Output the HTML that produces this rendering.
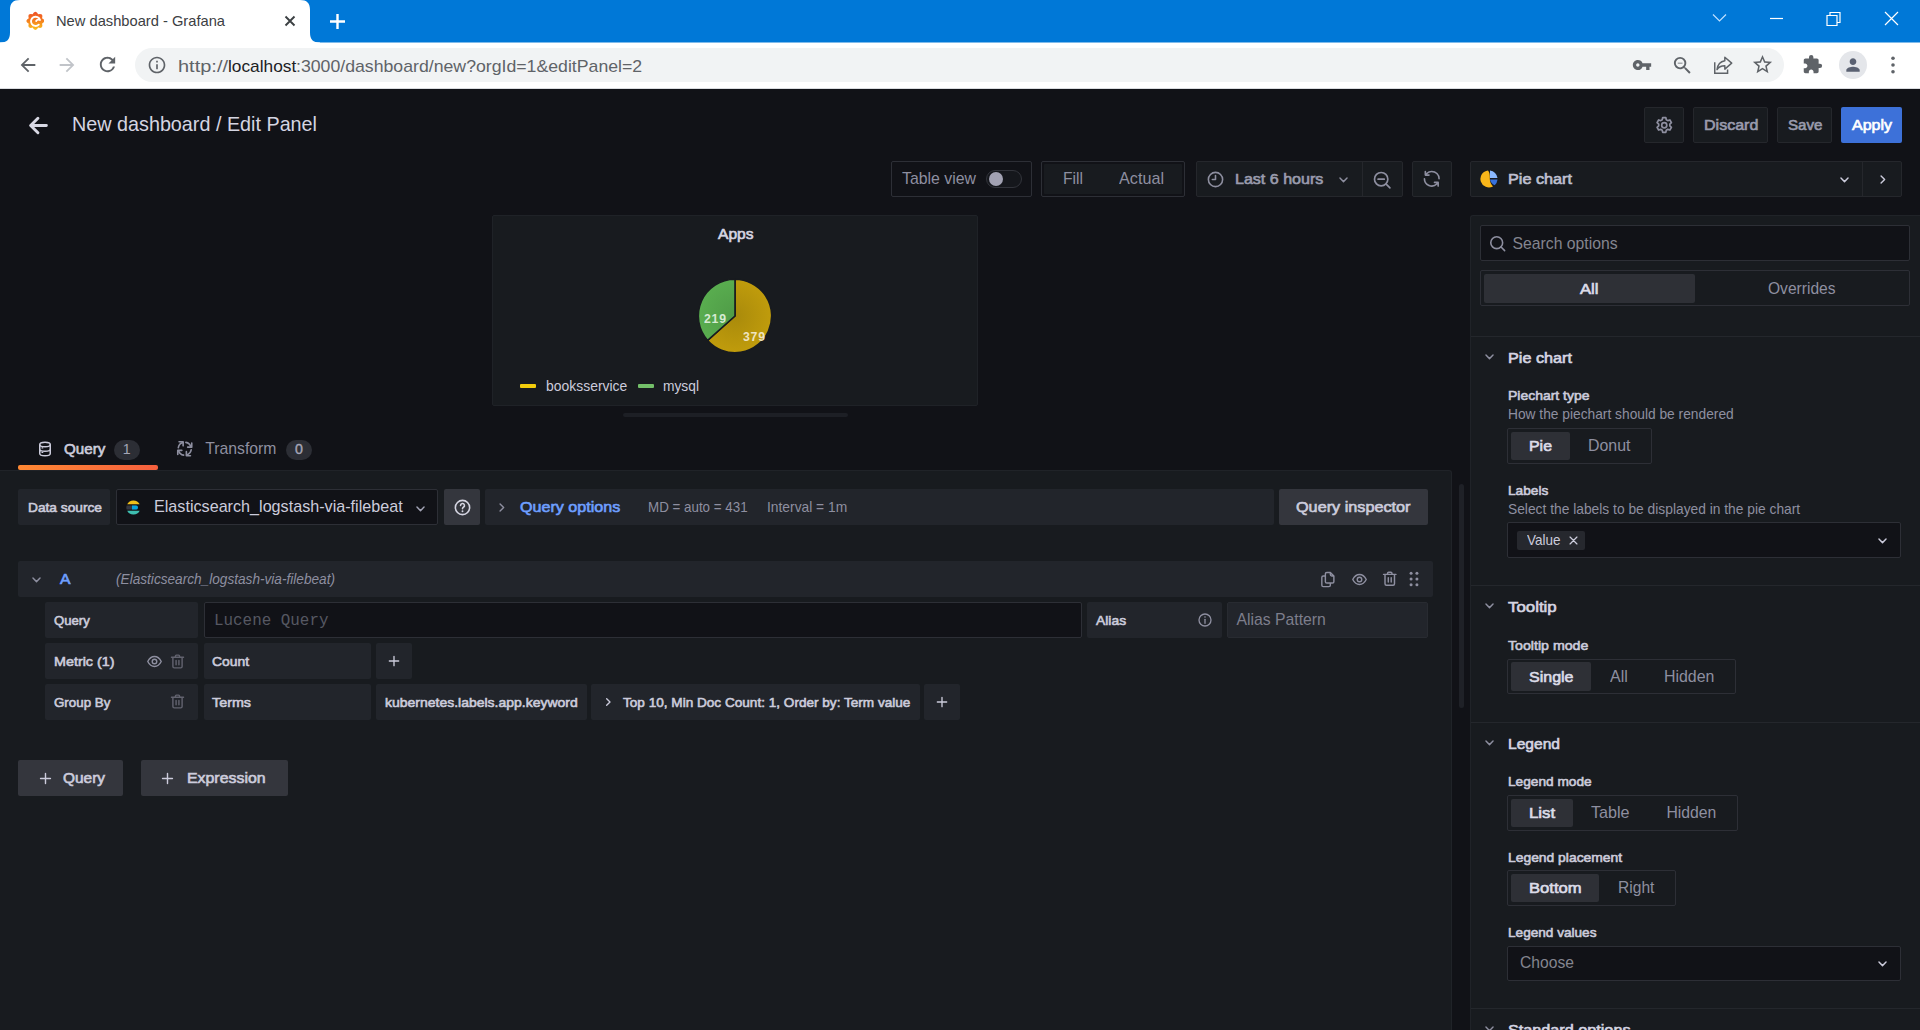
<!DOCTYPE html>
<html lang="en"><head><meta charset="utf-8"><title>New dashboard - Grafana</title>
<style>html,body{margin:0;padding:0}body{width:1920px;height:1030px;overflow:hidden;position:relative;background:#111217;font-family:"Liberation Sans",sans-serif}
.b{position:absolute;box-sizing:border-box;display:block}
.t{position:absolute;white-space:nowrap;line-height:1;transform-origin:0 50%;display:block}</style></head>
<body>
<div class="b" style="left:0px;top:30px;width:1920px;height:58px;background:#fff;"></div>
<svg class="b" style="left:0;top:0" width="1920" height="44" viewBox="0 0 1920 44"><rect width="1920" height="42.5" fill="#0078d7"/></svg>
<svg class="b" style="left:0;top:0" width="330" height="44" viewBox="0 0 330 44"><path d="M0 42.5 C7 42.5 10 39.5 10 32.5 V10 C10 3 13 0 20 0 H300 C307 0 310 3 310 10 V32.5 C310 39.5 313 42.5 320 42.5 V44 H0 Z" fill="#fff"/></svg>
<svg class="b" style="left:25.5px;top:10.6px" width="18.8" height="20" viewBox="0 0 20 21"><defs><linearGradient id="gf" x1="0" y1="1" x2="0" y2="0"><stop offset="0" stop-color="#fbc21a"/><stop offset="0.55" stop-color="#f47b20"/><stop offset="1" stop-color="#ee4f27"/></linearGradient></defs><path d="M10 0.7Q11.85 1.08 12.91 3.38Q15.28 2.5 16.86 3.54Q17.9 5.12 17.02 7.49Q19.32 8.55 19.7 10.4Q19.32 12.25 17.02 13.31Q17.9 15.68 16.86 17.26Q15.28 18.3 12.91 17.42Q11.85 19.72 10 20.1Q8.15 19.72 7.09 17.42Q4.72 18.3 3.14 17.26Q2.1 15.68 2.98 13.31Q0.68 12.25 0.3 10.4Q0.68 8.55 2.98 7.49Q2.1 5.12 3.14 3.54Q4.72 2.5 7.09 3.38Q8.15 1.08 10 0.7Z" fill="url(#gf)"/><path d="M14.9 9.4A4.9 4.9 0 1 0 13.6 14.4M14.9 9.4c-1.6-.6-3.4-.2-4.1 1" fill="none" stroke="#fff" stroke-width="2" stroke-linecap="round"/></svg>
<span class="t" style="left:55.6px;top:14px;font-size:14.5px;color:#3c4043;transform:scaleX(1.0129);">New dashboard - Grafana</span>
<svg class="b" style="left:284px;top:15px" width="12" height="12" viewBox="0 0 12 12"><path d="M1.5 1.5l9 9M10.5 1.5l-9 9" stroke="#3c4043" stroke-width="1.9" fill="none"/></svg>
<svg class="b" style="left:329px;top:13px" width="17" height="17" viewBox="0 0 17 17"><path d="M8.5 1v15M1 8.5h15" stroke="#fff" stroke-width="2.4" fill="none"/></svg>
<svg class="b" style="left:1700px;top:4px" width="210" height="30" viewBox="0 0 210 30"><g fill="none" stroke="#fff" stroke-width="1.2"><path d="M13 10.5l6.5 6.5 6.5-6.5" stroke="#bfe0ff"/><path d="M70 14.5h13"/><path d="M127 11.5h10v10h-10z"/><path d="M130 11.5v-3h10v10h-3"/><path d="M185 8l13 13M198 8l-13 13"/></g></svg>
<div class="b" style="left:0px;top:88px;width:1920px;height:1px;background:#dadce0;"></div>
<svg class="b" style="left:17px;top:54px" width="22" height="22" viewBox="0 0 24 24"><path d="M20 11H7.83l5.59-5.59L12 4l-8 8 8 8 1.41-1.41L7.83 13H20v-2z" fill="#5f6368"/></svg>
<svg class="b" style="left:56px;top:54px" width="22" height="22" viewBox="0 0 24 24"><path d="M12 4l-1.41 1.41L16.17 11H4v2h12.17l-5.58 5.59L12 20l8-8z" fill="#c1c4c9"/></svg>
<svg class="b" style="left:96px;top:53px" width="23" height="23" viewBox="0 0 24 24"><path d="M17.65 6.35A7.958 7.958 0 0 0 12 4c-4.42 0-7.99 3.58-7.99 8s3.57 8 7.99 8c3.73 0 6.84-2.55 7.73-6h-2.08A5.99 5.99 0 0 1 12 18c-3.31 0-6-2.69-6-6s2.69-6 6-6c1.66 0 3.14.69 4.22 1.78L13 11h7V4l-2.35 2.35z" fill="#5f6368"/></svg>
<div class="b" style="left:135px;top:48px;width:1649px;height:34px;background:#f1f3f4;border-radius:17px;"></div>
<svg class="b" style="left:147px;top:55px" width="20" height="20" viewBox="0 0 24 24"><path d="M11 7h2v2h-2zm0 4h2v6h-2zm1-9C6.48 2 2 6.48 2 12s4.48 10 10 10 10-4.48 10-10S17.52 2 12 2zm0 18c-4.41 0-8-3.59-8-8s3.59-8 8-8 8 3.59 8 8-3.59 8-8 8z" fill="#5f6368"/></svg>
<span class="t" style="left:177.7px;top:58px;font-size:17px;color:#5f6368;transform:scaleX(1.1756);">http://</span>
<span class="t" style="left:227.8px;top:58px;font-size:17px;color:#202124;transform:scaleX(1.0177);">localhost</span>
<span class="t" style="left:296.3px;top:58px;font-size:17px;color:#5f6368;transform:scaleX(1.0405);">:3000/dashboard/new?orgId=1&amp;editPanel=2</span>
<svg class="b" style="left:1632px;top:55px" width="20" height="20" viewBox="0 0 24 24"><path d="M12.65 10A5.99 5.99 0 0 0 7 6c-3.31 0-6 2.69-6 6s2.69 6 6 6a5.99 5.99 0 0 0 5.65-4H17v4h4v-4h2v-4H12.65zM7 14c-1.1 0-2-.9-2-2s.9-2 2-2 2 .9 2 2-.9 2-2 2z" fill="#5f6368"/></svg>
<svg class="b" style="left:1671px;top:54px" width="23" height="23" viewBox="0 0 24 24"><path d="M15.5 14h-.79l-.28-.27A6.471 6.471 0 0 0 16 9.5 6.5 6.5 0 1 0 9.5 16c1.61 0 3.09-.59 4.23-1.57l.27.28v.79l5 4.99L20.49 19l-4.99-5zm-6 0C7.01 14 5 11.99 5 9.5S7.01 5 9.5 5 14 7.01 14 9.5 11.99 14 9.5 14zM7 9h5v1H7z" fill="#5f6368"/></svg>
<svg class="b" style="left:1712px;top:54px" width="22" height="22" viewBox="0 0 24 24"><path d="M3 9v12h14v-4" fill="none" stroke="#5f6368" stroke-width="1.6"/><path d="M14 3.5l7.5 6.5-7.5 6.5v-3.8c-4 0-6.8 1.3-8.5 4.3.6-5 3.5-8.8 8.5-9.6z" fill="none" stroke="#5f6368" stroke-width="1.6" stroke-linejoin="round"/></svg>
<svg class="b" style="left:1751px;top:53px" width="23" height="23" viewBox="0 0 24 24"><path d="M22 9.24l-7.19-.62L12 2 9.19 8.63 2 9.24l5.46 4.73L5.82 21 12 17.27 18.18 21l-1.63-7.03L22 9.24zM12 15.4l-3.76 2.27 1-4.28-3.32-2.88 4.38-.38L12 6.1l1.71 4.04 4.38.38-3.32 2.88 1 4.28L12 15.4z" fill="#5f6368"/></svg>
<svg class="b" style="left:1802px;top:54px" width="21" height="21" viewBox="0 0 24 24"><path d="M20.5 11H19V7c0-1.1-.9-2-2-2h-4V3.5a2.5 2.5 0 0 0-5 0V5H4c-1.1 0-1.99.9-1.99 2v3.8H3.5c1.49 0 2.7 1.21 2.7 2.7s-1.21 2.7-2.7 2.7H2V20c0 1.1.9 2 2 2h3.8v-1.5c0-1.49 1.21-2.7 2.7-2.7 1.49 0 2.7 1.21 2.7 2.7V22H17c1.1 0 2-.9 2-2v-4h1.5a2.5 2.5 0 0 0 0-5z" fill="#5f6368"/></svg>
<div class="b" style="left:1839px;top:51px;width:28px;height:28px;background:#e4e6ea;border-radius:14px;"></div>
<svg class="b" style="left:1843px;top:55px" width="20" height="20" viewBox="0 0 24 24"><path d="M12 12c2.21 0 4-1.79 4-4s-1.79-4-4-4-4 1.79-4 4 1.79 4 4 4zm0 2c-2.67 0-8 1.34-8 4v2h16v-2c0-2.66-5.33-4-8-4z" fill="#5a6172"/></svg>
<svg class="b" style="left:1889px;top:55px" width="8" height="20" viewBox="0 0 8 20"><circle cx="4" cy="3.3" r="1.8" fill="#5f6368"/><circle cx="4" cy="10" r="1.8" fill="#5f6368"/><circle cx="4" cy="16.7" r="1.8" fill="#5f6368"/></svg>
<div class="b" style="left:0px;top:89px;width:1920px;height:941px;background:#111217;"></div>
<svg class="b" style="left:25.00px;top:111.50px;color:#d8d8e4;" width="27" height="27" viewBox="0 0 24 24"><path d="M19 12H5.5M11.5 5.5L5 12l6.5 6.5" fill="none" stroke="currentColor" stroke-width="2.6" stroke-linecap="round" stroke-linejoin="round"/></svg>
<span class="t" style="left:72px;top:113px;font-size:21px;color:#d5d5e2;transform:scaleX(0.9411);">New dashboard / Edit Panel</span>
<div class="b" style="left:1644px;top:107px;width:40px;height:36px;background:#181b1f;border:1px solid #25272c;border-radius:2px;"></div>
<svg class="b" style="left:1653.75px;top:114.75px;color:#8e8fa0;" width="20.5" height="20.5" viewBox="0 0 24 24"><circle cx="12" cy="12" r="3" fill="none" stroke="currentColor" stroke-width="2"/><path d="M10.2 3h3.6l.6 2.6 1.7 1 2.5-.8 1.8 3.1-1.9 1.8v2l1.9 1.8-1.8 3.1-2.5-.8-1.7 1-.6 2.6h-3.6l-.6-2.6-1.7-1-2.5.8-1.8-3.1 1.9-1.8v-2L3.6 8.9l1.8-3.1 2.5.800 1.7-1z" fill="none" stroke="currentColor" stroke-width="2" stroke-linejoin="round"/></svg>
<div class="b" style="left:1693px;top:107px;width:75px;height:36px;background:#181b1f;border:1px solid #25272c;border-radius:2px;"></div>
<span class="t" style="left:1704px;top:117px;font-size:15.5px;color:#9a9bad;-webkit-text-stroke:0.65px currentColor;transform:scaleX(1.0334);">Discard</span>
<div class="b" style="left:1777px;top:107px;width:55px;height:36px;background:#181b1f;border:1px solid #25272c;border-radius:2px;"></div>
<span class="t" style="left:1787.5px;top:117px;font-size:15.5px;color:#9a9bad;-webkit-text-stroke:0.65px currentColor;transform:scaleX(0.9761);">Save</span>
<div class="b" style="left:1841px;top:107px;width:61px;height:36px;background:#3d71d9;border-radius:2px;"></div>
<span class="t" style="left:1851.7px;top:117px;font-size:15.5px;color:#fff;-webkit-text-stroke:0.65px currentColor;transform:scaleX(1.0314);">Apply</span>
<div class="b" style="left:891px;top:161px;width:141px;height:36px;background:#111217;border:1px solid #2d2f36;border-radius:2px;"></div>
<span class="t" style="left:902px;top:171px;font-size:15.75px;color:#8e8fa0;transform:scaleX(1.0062);">Table view</span>
<div class="b" style="left:986px;top:170px;width:36px;height:18px;background:#15171c;border:1px solid #32343b;border-radius:9px;"></div>
<div class="b" style="left:988.5px;top:172px;width:14px;height:14px;background:#a2a2b3;border-radius:7px;"></div>
<div class="b" style="left:1041px;top:161px;width:144px;height:36px;background:#111217;border:1px solid #2d2f36;border-radius:2px;"></div>
<div class="b" style="left:1044px;top:164px;width:138px;height:30px;background:#181b1f;border-radius:1px;"></div>
<span class="t" style="left:1062.5px;top:171px;font-size:15.75px;color:#8e8fa0;transform:scaleX(0.9938);">Fill</span>
<span class="t" style="left:1119px;top:171px;font-size:15.75px;color:#8e8fa0;transform:scaleX(1.0278);">Actual</span>
<div class="b" style="left:1196px;top:161px;width:207px;height:36px;background:#181b1f;border:1px solid #25272c;border-radius:2px;"></div>
<div class="b" style="left:1362px;top:162px;width:1px;height:34px;background:#25272c;"></div>
<svg class="b" style="left:1205.50px;top:169.50px;color:#8e8fa0;" width="19" height="19" viewBox="0 0 24 24"><circle cx="12" cy="12" r="9" fill="none" stroke="currentColor" stroke-width="2"/><path d="M12 7v5H8" fill="none" stroke="currentColor" stroke-width="2" stroke-linecap="round" stroke-linejoin="round"/></svg>
<span class="t" style="left:1235px;top:171px;font-size:15.5px;color:#9a9bad;-webkit-text-stroke:0.65px currentColor;transform:scaleX(1.0350);">Last 6 hours</span>
<svg class="b" style="left:1335.00px;top:170.50px;color:#8e8fa0;" width="17" height="17" viewBox="0 0 24 24"><path d="M7 10l5 5 5-5" fill="none" stroke="currentColor" stroke-width="2" stroke-linecap="round" stroke-linejoin="round"/></svg>
<svg class="b" style="left:1372.00px;top:169.50px;color:#8e8fa0;" width="20" height="20" viewBox="0 0 24 24"><circle cx="11" cy="11" r="8" fill="none" stroke="currentColor" stroke-width="2"/><path d="M17 17l4.5 4.5M7.3 11h7.4" stroke="currentColor" stroke-width="2" stroke-linecap="round"/></svg>
<div class="b" style="left:1412px;top:161px;width:40px;height:36px;background:#181b1f;border:1px solid #25272c;border-radius:2px;"></div>
<svg class="b" style="left:1422.25px;top:169.45px;color:#8e8fa0;" width="19.5" height="19.5" viewBox="0 0 24 24"><path fill="currentColor" d="M19.91 15.51h-4.53a1 1 0 0 0 0 2h2.4A8 8 0 0 1 4 12a1 1 0 0 0-2 0 10 10 0 0 0 16.88 7.23V21a1 1 0 0 0 2 0v-4.5a1 1 0 0 0-.97-.99zM12 2a10 10 0 0 0-6.88 2.77V3a1 1 0 0 0-2 0v4.5a1 1 0 0 0 1 1h4.5a1 1 0 0 0 0-2h-2.4A8 8 0 0 1 20 12a1 1 0 0 0 2 0A10 10 0 0 0 12 2z"/></svg>
<div class="b" style="left:1470px;top:161px;width:432px;height:36px;background:#181b1f;border:1px solid #25272c;border-radius:2px;"></div>
<div class="b" style="left:1862px;top:162px;width:1px;height:34px;background:#25272c;"></div>
<svg class="b" style="left:1479px;top:169px" width="20" height="20" viewBox="0 0 20 20"><path d="M9 1.5A8.5 8.5 0 1 0 14 17.4c-2-2-3.2-4.8-3.2-7.4 0-3 .3-6-1.8-8.5z" fill="#f9b61a"/><path d="M11 1.5a8.5 8.5 0 0 1 7.5 7.5H11z" fill="#8ab8ff"/><path d="M11 10.5h7.5a8.5 8.5 0 0 1-2.8 5.7C13 15 11.4 13 11 10.5z" fill="#3871dc"/></svg>
<span class="t" style="left:1507.5px;top:171px;font-size:15.5px;color:#bfc0d0;-webkit-text-stroke:0.65px currentColor;transform:scaleX(1.0462);">Pie chart</span>
<svg class="b" style="left:1835.50px;top:170.50px;color:#ccccdc;" width="17" height="17" viewBox="0 0 24 24"><path d="M7 10l5 5 5-5" fill="none" stroke="currentColor" stroke-width="2" stroke-linecap="round" stroke-linejoin="round"/></svg>
<svg class="b" style="left:1873.50px;top:170.50px;color:#ccccdc;" width="17" height="17" viewBox="0 0 24 24"><path d="M10 7l5 5-5 5" fill="none" stroke="currentColor" stroke-width="2" stroke-linecap="round" stroke-linejoin="round"/></svg>
<div class="b" style="left:492px;top:215px;width:486px;height:190.5px;background:#181b1f;border:1px solid #1f2227;border-radius:2px;"></div>
<span class="t" style="left:717.5px;top:226px;font-size:15.5px;color:#d5d5e2;-webkit-text-stroke:0.65px currentColor;transform:scaleX(1.0044);">Apps</span>
<svg class="b" style="left:695px;top:276px" width="80" height="80" viewBox="-40 -40 80 80"><defs>
<radialGradient id="gy" gradientUnits="userSpaceOnUse" cx="0" cy="0" r="37"><stop offset="0" stop-color="#a98a0b"/><stop offset="1" stop-color="#c09c0c"/></radialGradient>
<radialGradient id="gg" gradientUnits="userSpaceOnUse" cx="0" cy="0" r="37"><stop offset="0" stop-color="#4f9b47"/><stop offset="1" stop-color="#59ad4f"/></radialGradient></defs>
<path d="M0 0 L0 -36.7 A36.7 36.7 0 1 1 -27.36 24.46 Z" fill="url(#gy)" stroke="#181b1f" stroke-width="1.6"/>
<path d="M0 0 L-27.36 24.46 A36.7 36.7 0 0 1 0 -36.7 Z" fill="url(#gg)" stroke="#181b1f" stroke-width="1.6"/></svg>
<span class="t" style="left:703.8px;top:313px;font-size:12.4px;color:#d6ead2;font-weight:700;transform:scaleX(0.9879);letter-spacing:0.8px;">219</span>
<span class="t" style="left:743px;top:331px;font-size:12.4px;color:#efe4c0;font-weight:700;transform:scaleX(0.9879);letter-spacing:0.8px;">379</span>
<div class="b" style="left:520px;top:384px;width:16px;height:4px;background:#f2cc0c;border-radius:1px;"></div>
<span class="t" style="left:545.5px;top:379px;font-size:14.2px;color:#ccccdc;transform:scaleX(0.9817);">booksservice</span>
<div class="b" style="left:638px;top:384px;width:16px;height:4px;background:#73bf69;border-radius:1px;"></div>
<span class="t" style="left:663.4px;top:379px;font-size:14.2px;color:#ccccdc;transform:scaleX(0.9713);">mysql</span>
<div class="b" style="left:623px;top:413px;width:225px;height:4px;background:#1d1f25;border-radius:2px;"></div>
<div class="b" style="left:0px;top:470px;width:1452px;height:560px;background:#181b1f;border-top:1px solid #202328;border-right:1px solid #202328;border-top-right-radius:3px;box-sizing:border-box;"></div>
<div class="b" style="left:1458.5px;top:484px;width:5px;height:224px;background:#1f2127;border-radius:2.5px;"></div>
<div class="b" style="left:18px;top:465px;width:140px;height:5px;border-radius:2px;background:linear-gradient(90deg,#ff8833,#f55f3e);"></div>
<svg class="b" style="left:36.00px;top:440.00px;color:#ccccdc;" width="18" height="18" viewBox="0 0 24 24"><ellipse cx="12" cy="6" rx="7" ry="3" fill="none" stroke="currentColor" stroke-width="2"/><path d="M5 6v12c0 1.7 3.1 3 7 3s7-1.3 7-3V6M5 12c0 1.7 3.1 3 7 3s7-1.3 7-3" fill="none" stroke="currentColor" stroke-width="2"/><path d="M8 10.5h1M8 16.5h1" stroke="currentColor" stroke-width="1.6" stroke-linecap="round"/></svg>
<span class="t" style="left:63.7px;top:441px;font-size:15.5px;color:#ccccdc;-webkit-text-stroke:0.65px currentColor;transform:scaleX(0.9782);">Query</span>
<div class="b" style="left:114px;top:439.5px;width:26px;height:20px;background:#2c2e35;border-radius:10px;"></div>
<span class="t" style="left:122.8px;top:442px;font-size:14.2px;color:#a4a5b5;">1</span>
<svg class="b" style="left:175.25px;top:439.25px;color:#8e8fa0;" width="19.5" height="19.5" viewBox="0 0 24 24"><g fill="none" stroke="currentColor" stroke-width="2" stroke-linecap="round" stroke-linejoin="round"><g transform="rotate(0 12 12)"><path d="M13.4 4.1A8 8 0 0 1 19.6 9.6"/><path d="M20.6 5v5h-5"/></g><g transform="rotate(90 12 12)"><path d="M13.4 4.1A8 8 0 0 1 19.6 9.6"/><path d="M20.6 5v5h-5"/></g><g transform="rotate(180 12 12)"><path d="M13.4 4.1A8 8 0 0 1 19.6 9.6"/><path d="M20.6 5v5h-5"/></g><g transform="rotate(270 12 12)"><path d="M13.4 4.1A8 8 0 0 1 19.6 9.6"/><path d="M20.6 5v5h-5"/></g></g></svg>
<span class="t" style="left:205.3px;top:441px;font-size:15.75px;color:#8e8fa0;">Transform</span>
<div class="b" style="left:286px;top:439.5px;width:26px;height:20px;background:#2c2e35;border-radius:10px;"></div>
<span class="t" style="left:295px;top:442px;font-size:14.2px;color:#a4a5b5;-webkit-text-stroke:0.4px currentColor;">0</span>
<div class="b" style="left:18px;top:489px;width:92px;height:36px;background:#22252b;border-radius:2px;"></div>
<span class="t" style="left:27.5px;top:501px;font-size:13.5px;color:#ccccdc;-webkit-text-stroke:0.6px currentColor;transform:scaleX(1.0165);">Data source</span>
<div class="b" style="left:116px;top:489px;width:322px;height:36px;background:#111217;border:1px solid #2d2f36;border-radius:2px;"></div>
<svg class="b" style="left:126px;top:500px" width="15" height="15" viewBox="0 0 15 15"><path d="M1.2 4.2A6.8 6.8 0 0 1 7.5 0.4c2.7 0 5 1.5 6.2 3.8z" fill="#f0bf1a"/><path d="M0.6 5.5h9.4a2 2 0 0 1 0 4H0.6a7 7 0 0 1 0-4z" fill="#343741"/><path d="M6 5.5h4a2 2 0 0 1 0 4H6z" fill="#07a5de"/><path d="M1.2 10.8h12.5a6.8 6.8 0 0 1-6.2 3.8 6.8 6.8 0 0 1-6.3-3.8z" fill="#3ebeb0"/></svg>
<span class="t" style="left:154.2px;top:499px;font-size:15.75px;color:#ccccdc;transform:scaleX(1.0256);">Elasticsearch_logstash-via-filebeat</span>
<svg class="b" style="left:411.50px;top:499.50px;color:#a3a4b6;" width="17" height="17" viewBox="0 0 24 24"><path d="M7 10l5 5 5-5" fill="none" stroke="currentColor" stroke-width="2" stroke-linecap="round" stroke-linejoin="round"/></svg>
<div class="b" style="left:444px;top:489px;width:36px;height:36px;background:#34363d;border-radius:2px;"></div>
<svg class="b" style="left:452.50px;top:497.50px;color:#d5d5e2;" width="19" height="19" viewBox="0 0 24 24"><circle cx="12" cy="12" r="9" fill="none" stroke="currentColor" stroke-width="2"/><path d="M9.5 9.5a2.5 2.5 0 1 1 3.6 2.2c-.7.4-1.1.900-1.1 1.8" fill="none" stroke="currentColor" stroke-width="2" stroke-linecap="round"/><circle cx="12" cy="16.8" r="1.2" fill="currentColor"/></svg>
<div class="b" style="left:485px;top:489px;width:789px;height:36px;background:#22252b;border-radius:2px;"></div>
<svg class="b" style="left:492.50px;top:498.50px;color:#8e8fa0;" width="17" height="17" viewBox="0 0 24 24"><path d="M10 7l5 5-5 5" fill="none" stroke="currentColor" stroke-width="2" stroke-linecap="round" stroke-linejoin="round"/></svg>
<span class="t" style="left:520.4px;top:499px;font-size:15.5px;color:#6e9fff;-webkit-text-stroke:0.65px currentColor;transform:scaleX(1.0394);">Query options</span>
<span class="t" style="left:648.4px;top:500px;font-size:14.2px;color:#8e8fa0;transform:scaleX(0.9424);">MD = auto = 431</span>
<span class="t" style="left:767px;top:500px;font-size:14.2px;color:#8e8fa0;transform:scaleX(0.9732);">Interval = 1m</span>
<div class="b" style="left:1279px;top:489px;width:149px;height:36px;background:#34363d;border-radius:2px;"></div>
<span class="t" style="left:1296.3px;top:499px;font-size:15.5px;color:#ccccdc;-webkit-text-stroke:0.65px currentColor;transform:scaleX(1.0464);">Query inspector</span>
<div class="b" style="left:18px;top:561px;width:1415px;height:36px;background:#22252b;border-radius:2px;"></div>
<svg class="b" style="left:27.50px;top:570.50px;color:#8e8fa0;" width="17" height="17" viewBox="0 0 24 24"><path d="M7 10l5 5 5-5" fill="none" stroke="currentColor" stroke-width="2" stroke-linecap="round" stroke-linejoin="round"/></svg>
<span class="t" style="left:59.8px;top:571px;font-size:15.5px;color:#6e9fff;-webkit-text-stroke:0.65px currentColor;transform:scaleX(1.0151);">A</span>
<span class="t" style="left:116.4px;top:572px;font-size:14.2px;color:#8e8fa0;transform:scaleX(0.9610);font-style:italic;">(Elasticsearch_logstash-via-filebeat)</span>
<svg class="b" style="left:1318.50px;top:570.70px;color:#8e8fa0;" width="17" height="17" viewBox="0 0 24 24"><path d="M11 2h5l5 5v8a2 2 0 0 1-2 2h-8a2 2 0 0 1-2-2V4a2 2 0 0 1 2-2zM16 2v3a2 2 0 0 0 2 2h3M9 7H6a2 2 0 0 0-2 2v11a2 2 0 0 0 2 2h8a2 2 0 0 0 2-2v-3" fill="none" stroke="currentColor" stroke-width="2" stroke-linejoin="round"/></svg>
<svg class="b" style="left:1350.50px;top:570.50px;color:#8e8fa0;" width="17" height="17" viewBox="0 0 24 24"><path d="M2.5 12C4.8 7.5 8.2 5 12 5s7.2 2.5 9.5 7c-2.3 4.5-5.7 7-9.5 7s-7.2-2.5-9.5-7z" fill="none" stroke="currentColor" stroke-width="2" stroke-linejoin="round"/><circle cx="12" cy="12" r="3.2" fill="none" stroke="currentColor" stroke-width="2"/></svg>
<svg class="b" style="left:1381.25px;top:570.45px;color:#8e8fa0;" width="17.5" height="17.5" viewBox="0 0 24 24"><path d="M3.5 6h17M9 6V4.5A1.5 1.5 0 0 1 10.5 3h3A1.5 1.5 0 0 1 15 4.5V6M5.5 6v13a2 2 0 0 0 2 2h9a2 2 0 0 0 2-2V6M10 10.5v6M14 10.5v6" fill="none" stroke="currentColor" stroke-width="2" stroke-linecap="round" stroke-linejoin="round"/></svg>
<svg class="b" style="left:1404.00px;top:569.00px;color:#8e8fa0;" width="20" height="20" viewBox="0 0 24 24"><g fill="currentColor"><circle cx="8.5" cy="5" r="1.8"/><circle cx="15.5" cy="5" r="1.8"/><circle cx="8.5" cy="12" r="1.8"/><circle cx="15.5" cy="12" r="1.8"/><circle cx="8.5" cy="19" r="1.8"/><circle cx="15.5" cy="19" r="1.8"/></g></svg>
<div class="b" style="left:45px;top:602px;width:153px;height:36px;background:#22252b;border-radius:2px;"></div>
<span class="t" style="left:54px;top:614px;font-size:13.5px;color:#ccccdc;-webkit-text-stroke:0.6px currentColor;transform:scaleX(0.9737);">Query</span>
<div class="b" style="left:203.5px;top:602px;width:878px;height:36px;background:#111217;border:1px solid #2d2f36;border-radius:2px;"></div>
<span class="t" style="left:213.5px;top:614px;font-size:15.75px;color:#565862;font-family:'Liberation Mono', monospace;transform:scaleX(1.0095);">Lucene Query</span>
<div class="b" style="left:1087px;top:602px;width:135px;height:36px;background:#22252b;border-radius:2px;"></div>
<span class="t" style="left:1096.2px;top:614px;font-size:13.5px;color:#ccccdc;-webkit-text-stroke:0.6px currentColor;transform:scaleX(1.0285);">Alias</span>
<svg class="b" style="left:1197.00px;top:612.00px;color:#8e8fa0;" width="16" height="16" viewBox="0 0 24 24"><circle cx="12" cy="12" r="9" fill="none" stroke="currentColor" stroke-width="2"/><path d="M12 11v6" stroke="currentColor" stroke-width="2" stroke-linecap="round"/><circle cx="12" cy="7.6" r="1.2" fill="currentColor"/></svg>
<div class="b" style="left:1226.5px;top:602px;width:201.5px;height:36px;background:#22252b;border:1px solid #282b31;border-radius:2px;"></div>
<span class="t" style="left:1236.5px;top:612px;font-size:15.75px;color:#7d7e8c;">Alias Pattern</span>
<div class="b" style="left:45px;top:643px;width:153px;height:36px;background:#22252b;border-radius:2px;"></div>
<span class="t" style="left:54px;top:655px;font-size:13.5px;color:#ccccdc;-webkit-text-stroke:0.6px currentColor;transform:scaleX(1.0614);">Metric (1)</span>
<svg class="b" style="left:145.50px;top:652.50px;color:#8e8fa0;" width="17" height="17" viewBox="0 0 24 24"><path d="M2.5 12C4.8 7.5 8.2 5 12 5s7.2 2.5 9.5 7c-2.3 4.5-5.7 7-9.5 7s-7.2-2.5-9.5-7z" fill="none" stroke="currentColor" stroke-width="2" stroke-linejoin="round"/><circle cx="12" cy="12" r="3.2" fill="none" stroke="currentColor" stroke-width="2"/></svg>
<svg class="b" style="left:168.80px;top:652.70px;color:#62636f;" width="17" height="17" viewBox="0 0 24 24"><path d="M3.5 6h17M9 6V4.5A1.5 1.5 0 0 1 10.5 3h3A1.5 1.5 0 0 1 15 4.5V6M5.5 6v13a2 2 0 0 0 2 2h9a2 2 0 0 0 2-2V6M10 10.5v6M14 10.5v6" fill="none" stroke="currentColor" stroke-width="2" stroke-linecap="round" stroke-linejoin="round"/></svg>
<div class="b" style="left:203.5px;top:643px;width:167.5px;height:36px;background:#22252b;border-radius:2px;"></div>
<span class="t" style="left:211.6px;top:655px;font-size:13.5px;color:#ccccdc;-webkit-text-stroke:0.6px currentColor;transform:scaleX(1.0297);">Count</span>
<div class="b" style="left:376.3px;top:643px;width:35.5px;height:36px;background:#22252b;border-radius:2px;"></div>
<svg class="b" style="left:386.00px;top:653.00px;color:#ccccdc;" width="16" height="16" viewBox="0 0 24 24"><path d="M12 5v14M5 12h14" fill="none" stroke="currentColor" stroke-width="2" stroke-linecap="round"/></svg>
<div class="b" style="left:45px;top:684px;width:153px;height:36px;background:#22252b;border-radius:2px;"></div>
<span class="t" style="left:54px;top:696px;font-size:13.5px;color:#ccccdc;-webkit-text-stroke:0.6px currentColor;transform:scaleX(0.9872);">Group By</span>
<svg class="b" style="left:168.80px;top:693.30px;color:#62636f;" width="17" height="17" viewBox="0 0 24 24"><path d="M3.5 6h17M9 6V4.5A1.5 1.5 0 0 1 10.5 3h3A1.5 1.5 0 0 1 15 4.5V6M5.5 6v13a2 2 0 0 0 2 2h9a2 2 0 0 0 2-2V6M10 10.5v6M14 10.5v6" fill="none" stroke="currentColor" stroke-width="2" stroke-linecap="round" stroke-linejoin="round"/></svg>
<div class="b" style="left:203.5px;top:684px;width:167.5px;height:36px;background:#22252b;border-radius:2px;"></div>
<span class="t" style="left:211.6px;top:696px;font-size:13.5px;color:#ccccdc;-webkit-text-stroke:0.6px currentColor;transform:scaleX(1.0612);">Terms</span>
<div class="b" style="left:376.3px;top:684px;width:210.5px;height:36px;background:#22252b;border-radius:2px;"></div>
<span class="t" style="left:384.7px;top:696px;font-size:13.5px;color:#ccccdc;-webkit-text-stroke:0.6px currentColor;transform:scaleX(1.0359);">kubernetes.labels.app.keyword</span>
<div class="b" style="left:591.4px;top:684px;width:328.2px;height:36px;background:#22252b;border-radius:2px;"></div>
<svg class="b" style="left:600.30px;top:694.00px;color:#ccccdc;" width="16" height="16" viewBox="0 0 24 24"><path d="M10 7l5 5-5 5" fill="none" stroke="currentColor" stroke-width="2" stroke-linecap="round" stroke-linejoin="round"/></svg>
<span class="t" style="left:623.4px;top:696px;font-size:13.5px;color:#ccccdc;-webkit-text-stroke:0.6px currentColor;transform:scaleX(1.0062);">Top 10, Min Doc Count: 1, Order by: Term value</span>
<div class="b" style="left:924.3px;top:684px;width:35.8px;height:36px;background:#22252b;border-radius:2px;"></div>
<svg class="b" style="left:934.00px;top:694.00px;color:#ccccdc;" width="16" height="16" viewBox="0 0 24 24"><path d="M12 5v14M5 12h14" fill="none" stroke="currentColor" stroke-width="2" stroke-linecap="round"/></svg>
<div class="b" style="left:18px;top:760px;width:105px;height:36px;background:#34363d;border-radius:2px;"></div>
<svg class="b" style="left:36.50px;top:769.50px;color:#ccccdc;" width="17" height="17" viewBox="0 0 24 24"><path d="M12 5v14M5 12h14" fill="none" stroke="currentColor" stroke-width="2" stroke-linecap="round"/></svg>
<span class="t" style="left:63.2px;top:770px;font-size:15.5px;color:#ccccdc;-webkit-text-stroke:0.65px currentColor;transform:scaleX(0.9948);">Query</span>
<div class="b" style="left:141px;top:760px;width:147px;height:36px;background:#34363d;border-radius:2px;"></div>
<svg class="b" style="left:159.20px;top:769.50px;color:#ccccdc;" width="17" height="17" viewBox="0 0 24 24"><path d="M12 5v14M5 12h14" fill="none" stroke="currentColor" stroke-width="2" stroke-linecap="round"/></svg>
<span class="t" style="left:186.6px;top:770px;font-size:15.5px;color:#ccccdc;-webkit-text-stroke:0.65px currentColor;transform:scaleX(1.0249);">Expression</span>
<div class="b" style="left:1470px;top:215px;width:450px;height:815px;background:#181b1f;border-top:1px solid #202328;border-left:1px solid #202328;box-sizing:border-box;border-top-left-radius:3px;"></div>
<div class="b" style="left:1480px;top:225px;width:430px;height:36px;background:#111217;border:1px solid #2d2f36;border-radius:2px;"></div>
<svg class="b" style="left:1488.00px;top:234.00px;color:#8e8fa0;" width="19" height="19" viewBox="0 0 24 24"><circle cx="11" cy="11" r="7.5" fill="none" stroke="currentColor" stroke-width="2"/><path d="M16.5 16.5L21 21" stroke="currentColor" stroke-width="2" stroke-linecap="round"/></svg>
<span class="t" style="left:1512.5px;top:236px;font-size:15.75px;color:#84858f;">Search options</span>
<div class="b" style="left:1480px;top:270px;width:430px;height:36px;border:1px solid #2d2f36;border-radius:2px;"></div>
<div class="b" style="left:1484px;top:274px;width:211px;height:29px;background:#2e3036;border-radius:2px;"></div>
<span class="t" style="left:1579.5px;top:281px;font-size:15.5px;color:#dcdce8;-webkit-text-stroke:0.65px currentColor;transform:scaleX(1.0734);">All</span>
<span class="t" style="left:1767.5px;top:281px;font-size:15.75px;color:#8e8fa0;transform:scaleX(0.9886);">Overrides</span>
<div class="b" style="left:1471px;top:336px;width:1446px;height:1px;background:#24272c;"></div><svg class="b" style="left:1480.50px;top:348.00px;color:#8e8fa0;" width="17" height="17" viewBox="0 0 24 24"><path d="M7 10l5 5 5-5" fill="none" stroke="currentColor" stroke-width="2" stroke-linecap="round" stroke-linejoin="round"/></svg><span class="t" style="left:1507.5px;top:350px;font-size:15.5px;color:#d5d5e2;-webkit-text-stroke:0.65px currentColor;transform:scaleX(1.0462);">Pie chart</span>
<span class="t" style="left:1507.5px;top:389px;font-size:13.5px;color:#ccccdc;-webkit-text-stroke:0.6px currentColor;transform:scaleX(1.0343);">Piechart type</span>
<span class="t" style="left:1507.5px;top:407px;font-size:14.2px;color:#8e8fa0;transform:scaleX(0.9700);">How the piechart should be rendered</span>
<div class="b" style="left:1507px;top:428px;width:145px;height:35.5px;border:1px solid #2d2f36;border-radius:2px;"></div><div class="b" style="left:1511px;top:431.5px;width:59px;height:28.5px;background:#2e3036;border-radius:2px;"></div><span class="t" style="left:1528.6px;top:438px;font-size:15.5px;color:#dcdce8;-webkit-text-stroke:0.65px currentColor;transform:scaleX(1.0265);">Pie</span><span class="t" style="left:1587.9px;top:438px;font-size:15.75px;color:#8e8fa0;transform:scaleX(1.0112);">Donut</span>
<span class="t" style="left:1507.5px;top:484px;font-size:13.5px;color:#ccccdc;-webkit-text-stroke:0.6px currentColor;transform:scaleX(1.0126);">Labels</span>
<span class="t" style="left:1507.5px;top:502px;font-size:14.2px;color:#8e8fa0;transform:scaleX(0.9724);">Select the labels to be displayed in the pie chart</span>
<div class="b" style="left:1507px;top:522px;width:394px;height:36px;background:#111217;border:1px solid #2d2f36;border-radius:2px;"></div>
<div class="b" style="left:1517px;top:530.5px;width:68px;height:19.5px;background:#26282e;border-radius:2px;"></div>
<span class="t" style="left:1526.5px;top:533px;font-size:14.2px;color:#ccccdc;transform:scaleX(0.9508);">Value</span>
<svg class="b" style="left:1565.70px;top:532.70px;color:#ccccdc;" width="15" height="15" viewBox="0 0 24 24"><path d="M6.5 6.5l11 11M17.5 6.5l-11 11" fill="none" stroke="currentColor" stroke-width="2" stroke-linecap="round"/></svg>
<svg class="b" style="left:1873.50px;top:532.00px;color:#ccccdc;" width="17" height="17" viewBox="0 0 24 24"><path d="M7 10l5 5 5-5" fill="none" stroke="currentColor" stroke-width="2" stroke-linecap="round" stroke-linejoin="round"/></svg>
<div class="b" style="left:1471px;top:585px;width:1446px;height:1px;background:#24272c;"></div><svg class="b" style="left:1480.50px;top:597.00px;color:#8e8fa0;" width="17" height="17" viewBox="0 0 24 24"><path d="M7 10l5 5 5-5" fill="none" stroke="currentColor" stroke-width="2" stroke-linecap="round" stroke-linejoin="round"/></svg><span class="t" style="left:1507.5px;top:599px;font-size:15.5px;color:#d5d5e2;-webkit-text-stroke:0.65px currentColor;transform:scaleX(1.0868);">Tooltip</span>
<span class="t" style="left:1507.5px;top:639px;font-size:13.5px;color:#ccccdc;-webkit-text-stroke:0.6px currentColor;transform:scaleX(1.0503);">Tooltip mode</span>
<div class="b" style="left:1507px;top:658.5px;width:228.5px;height:35.5px;border:1px solid #2d2f36;border-radius:2px;"></div><div class="b" style="left:1511px;top:662.0px;width:79.70000000000005px;height:28.5px;background:#2e3036;border-radius:2px;"></div><span class="t" style="left:1528.6px;top:669px;font-size:15.5px;color:#dcdce8;-webkit-text-stroke:0.65px currentColor;transform:scaleX(1.0326);">Single</span><span class="t" style="left:1609.7px;top:669px;font-size:15.75px;color:#8e8fa0;transform:scaleX(1.0162);">All</span><span class="t" style="left:1664px;top:669px;font-size:15.75px;color:#8e8fa0;transform:scaleX(1.0096);">Hidden</span>
<div class="b" style="left:1471px;top:722px;width:1446px;height:1px;background:#24272c;"></div><svg class="b" style="left:1480.50px;top:734.00px;color:#8e8fa0;" width="17" height="17" viewBox="0 0 24 24"><path d="M7 10l5 5 5-5" fill="none" stroke="currentColor" stroke-width="2" stroke-linecap="round" stroke-linejoin="round"/></svg><span class="t" style="left:1507.5px;top:736px;font-size:15.5px;color:#d5d5e2;-webkit-text-stroke:0.65px currentColor;transform:scaleX(1.0051);">Legend</span>
<span class="t" style="left:1507.5px;top:775px;font-size:13.5px;color:#ccccdc;-webkit-text-stroke:0.6px currentColor;transform:scaleX(1.0136);">Legend mode</span>
<div class="b" style="left:1507px;top:795px;width:230.5px;height:35.5px;border:1px solid #2d2f36;border-radius:2px;"></div><div class="b" style="left:1511px;top:798.5px;width:62px;height:28.5px;background:#2e3036;border-radius:2px;"></div><span class="t" style="left:1528.6px;top:805px;font-size:15.5px;color:#dcdce8;-webkit-text-stroke:0.65px currentColor;transform:scaleX(1.0860);">List</span><span class="t" style="left:1591.4px;top:805px;font-size:15.75px;color:#8e8fa0;transform:scaleX(1.0251);">Table</span><span class="t" style="left:1666.4px;top:805px;font-size:15.75px;color:#8e8fa0;">Hidden</span>
<span class="t" style="left:1507.5px;top:851px;font-size:13.5px;color:#ccccdc;-webkit-text-stroke:0.6px currentColor;transform:scaleX(1.0271);">Legend placement</span>
<div class="b" style="left:1507px;top:870.3px;width:169px;height:35.5px;border:1px solid #2d2f36;border-radius:2px;"></div><div class="b" style="left:1511px;top:873.8px;width:88px;height:28.5px;background:#2e3036;border-radius:2px;"></div><span class="t" style="left:1528.6px;top:880px;font-size:15.5px;color:#dcdce8;-webkit-text-stroke:0.65px currentColor;transform:scaleX(1.0731);">Bottom</span><span class="t" style="left:1617.6px;top:880px;font-size:15.75px;color:#8e8fa0;transform:scaleX(0.9896);">Right</span>
<span class="t" style="left:1507.5px;top:926px;font-size:13.5px;color:#ccccdc;-webkit-text-stroke:0.6px currentColor;transform:scaleX(1.0076);">Legend values</span>
<div class="b" style="left:1507px;top:945.5px;width:394px;height:35.5px;background:#111217;border:1px solid #2d2f36;border-radius:2px;"></div>
<span class="t" style="left:1519.7px;top:955px;font-size:15.75px;color:#84858f;transform:scaleX(0.9927);">Choose</span>
<svg class="b" style="left:1873.50px;top:955.00px;color:#ccccdc;" width="17" height="17" viewBox="0 0 24 24"><path d="M7 10l5 5 5-5" fill="none" stroke="currentColor" stroke-width="2" stroke-linecap="round" stroke-linejoin="round"/></svg>
<div class="b" style="left:1471px;top:1008px;width:1446px;height:1px;background:#24272c;"></div><svg class="b" style="left:1480.50px;top:1020.00px;color:#8e8fa0;" width="17" height="17" viewBox="0 0 24 24"><path d="M7 10l5 5 5-5" fill="none" stroke="currentColor" stroke-width="2" stroke-linecap="round" stroke-linejoin="round"/></svg><span class="t" style="left:1507.5px;top:1022px;font-size:15.5px;color:#d5d5e2;-webkit-text-stroke:0.65px currentColor;transform:scaleX(1.0452);">Standard options</span>
</body></html>
